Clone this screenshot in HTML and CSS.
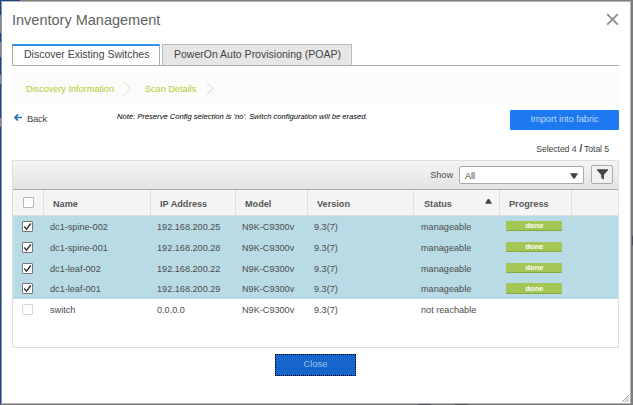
FILE: index.html
```html
<!DOCTYPE html>
<html lang="en">
<head>
<meta charset="utf-8">
<title>Inventory Management</title>
<link rel="stylesheet" href="styles.css">
</head>
<body>
<div class="dialog">
  <header class="head">
    <h1><span>Inventory Management</span></h1>
    <svg class="x" width="13" height="13" viewBox="0 0 13 13"><path d="M1.2 1.2 11.8 11.6M11.8 1.2 1.2 11.6" stroke="#8c8c8c" stroke-width="1.8" fill="none"/></svg>
  </header>
  <nav class="tabs">
    <div class="tab on"><span>Discover Existing Switches</span></div>
    <div class="tab off"><span>PowerOn Auto Provisioning (POAP)</span></div>
  </nav>
  <div class="steps">
    <span class="s1">Discovery Information</span>
    <svg class="c1" width="9" height="15" viewBox="0 0 9 15"><path d="M1 .5 7.5 7.5 1 14.5" fill="none" stroke="#d9d9d9"/></svg>
    <span class="s2">Scan Details</span>
    <svg class="c2" width="9" height="15" viewBox="0 0 9 15"><path d="M1 1.5 7 7.5 1 13.5" fill="none" stroke="#d0d0d0"/></svg>
  </div>
  <div class="actions">
    <svg class="arrow" width="8" height="7" viewBox="0 0 8 7"><path d="M4 .4 1 3.5 4 6.6M1 3.5H8" fill="none" stroke="#2672ab" stroke-width="1.7"/></svg>
    <span class="back">Back</span>
    <span class="note">Note: Preserve Config selection is 'no'. Switch configuration will be erased.</span>
    <div class="import"><span>Import into fabric</span></div>
  </div>
  <div class="count"><span>Selected 4</span><b>/</b><span>Total 5</span></div>
  <section class="grid">
    <div class="toolbar">
      <span class="show">Show</span>
      <div class="select"><span>All</span><svg width="8" height="6" viewBox="0 0 8 6"><path d="M0 .3H8L4.8 5.6H3.2Z" fill="#444"/></svg></div>
      <div class="filter"><svg width="11" height="11" viewBox="0 0 11 11"><path d="M0 .3H11V1.3L6.9 5.8V10.8L4.2 8.8V5.8L0 1.3Z" fill="#454545"/></svg></div>
    </div>
    <div class="row th">
      <div><i class="box"></i></div><div>Name</div><div>IP Address</div><div>Model</div><div>Version</div>
      <div class="sort">Status<svg width="7" height="5" viewBox="0 0 7 5"><path d="M0 4.8H7L4.2 0H2.8Z" fill="#454545"/></svg></div>
      <div>Progress</div><div></div>
    </div>
    <div class="row sel"><div><i class="box on"><svg viewBox="0 0 9 9"><path d="M1.2 4.5 3.5 7.1 7.8 1.5"/></svg></i></div><div>dc1-spine-002</div><div>192.168.200.25</div><div>N9K-C9300v</div><div>9.3(7)</div><div class="st">manageable</div><div><b class="done">done</b></div><div></div></div>
    <div class="row sel"><div><i class="box on"><svg viewBox="0 0 9 9"><path d="M1.2 4.5 3.5 7.1 7.8 1.5"/></svg></i></div><div>dc1-spine-001</div><div>192.168.200.28</div><div>N9K-C9300v</div><div>9.3(7)</div><div class="st">manageable</div><div><b class="done">done</b></div><div></div></div>
    <div class="row sel"><div><i class="box on"><svg viewBox="0 0 9 9"><path d="M1.2 4.5 3.5 7.1 7.8 1.5"/></svg></i></div><div>dc1-leaf-002</div><div>192.168.200.22</div><div>N9K-C9300v</div><div>9.3(7)</div><div class="st">manageable</div><div><b class="done">done</b></div><div></div></div>
    <div class="row sel last"><div><i class="box on"><svg viewBox="0 0 9 9"><path d="M1.2 4.5 3.5 7.1 7.8 1.5"/></svg></i></div><div>dc1-leaf-001</div><div>192.168.200.29</div><div>N9K-C9300v</div><div>9.3(7)</div><div class="st">manageable</div><div><b class="done">done</b></div><div></div></div>
    <div class="row"><div><i class="box dim"></i></div><div>switch</div><div>0.0.0.0</div><div>N9K-C9300v</div><div>9.3(7)</div><div class="st">not reachable</div><div></div><div></div></div>
  </section>
  <div class="close"><span>Close</span></div>
  <svg class="grip" width="7" height="7" viewBox="0 0 7 7"><path d="M0 7 7 0M2.5 7 7 2.5M5 7 7 5" stroke="#999" fill="none"/></svg>
</div>
<div class="peek"></div>
</body>
</html>
```

FILE: styles.css
```css
* { box-sizing: border-box; }
body {
  margin: 0; width: 633px; height: 405px; overflow: hidden; padding: 1px 2px 1px 1px;
  font: 9.15px/12px "Liberation Sans", Arial, sans-serif; color: #4d4d4d;
  background:
    linear-gradient(90deg, #7d7d7d 418px, #55565c 418px 431px, #7d7d7d 431px 455px, #55565c 455px 468px, #7d7d7d 468px) 0 404px / 100% 1px no-repeat,
    linear-gradient(#1d4686, #1d4686) 0 404px / 20px 1px no-repeat,
    linear-gradient(#1d4686, #1d4686) 0 0 / 20px 1px no-repeat,
    linear-gradient(#1d4686 15px, #8b8b8b 15px 33px, #1d4686 33px 42px, #8b8b8b 42px 57px, #1d4686 57px 75px, #8b8b8b 75px 84px, #1d4686 84px 118px, #8b8b8b 118px 127px, #1d4686 127px) 0 0 / 1px 100% no-repeat,
    #7d7d7d;
}
/* the gradients above paint the last and first pixel rows over the page behind */
.dialog { position: relative; width: 630px; height: 403px; background: #fff; border: 1px solid #b3b3b3; border-left-color: #8494ae; padding: 0 11px 0 10px; }
.head { display: flex; justify-content: space-between; height: 42px; padding-top: 9px; }
h1 { margin: 0; font-size: 14.5px; line-height: 18px; font-weight: 400; color: #626262; }
.x { margin-top: 2px; }
.tabs { display: flex; gap: 2px; height: 22px; border-bottom: 1px solid #acacac; }
.tab { height: 22px; border: 1px solid #adadad; font-size: 10.5px; line-height: 20px; padding-left: 11px; white-space: nowrap; color: #444; }
.tab.on { width: 148px; border-top: 2px solid #2f91ea; line-height: 17px; }
.tab.off { width: 190px; background: #e6e6e6; border-color: #bcbcbc; border-bottom-color: #acacac; line-height: 19px; }
.steps { display: flex; align-items: center; height: 31px; margin-top: 7px; background: #fbfbf9; padding-left: 14px; color: #b1ce35; font-size: 9.1px; white-space: nowrap; }
.s1 { width: 97px; }
.c1 { margin-right: 13px; }
.s2 { width: 61px; }
.actions { display: flex; height: 26px; padding-top: 6px; white-space: nowrap; }
.arrow { margin: 4px 5px 0 2px; }
.back { width: 90px; padding-top: 3px; color: #444; font-size: 9.4px; letter-spacing: -.25px; }
.note { width: 393px; padding-top: 1px; font-size: 7.6px; font-style: italic; color: #000; }
.import { width: 109px; height: 20px; background: #1e78f0; border-radius: 1px; color: #b9d5fa; text-align: center; font-size: 9.4px; letter-spacing: -.1px; line-height: 18px; }
.count { display: flex; justify-content: flex-end; height: 30px; padding: 13px 10px 0 0; font-size: 8.7px; letter-spacing: -.1px; color: #444; }
.count b { margin: 0 2px 0 3px; font-size: 10px; }
.grid { width: 607px; height: 188px; border: 1px solid #dfdfdf; border-radius: 1px; }
.toolbar { display: flex; align-items: flex-start; justify-content: flex-end; height: 29px; padding: 4px 5px 0 0; background: linear-gradient(#f5f5f5, #e3e3e3); border-bottom: 1px solid #aaa; }
.show { margin: 4px 6px 0 0; }
.select { display: flex; align-items: center; justify-content: space-between; width: 125px; height: 18px; padding: 2px 5px 0 5px; border: 1px solid #aaa; border-radius: 2px; background: #fff; margin: 1px 7px 0 0; }
.select svg { margin-bottom: 1px; }
.filter { display: flex; align-items: center; justify-content: center; width: 22px; height: 19px; border: 1px solid #aaa; border-radius: 2px; background: #f1f1f1; }
.row { display: grid; grid-template-columns: 31px 107px 85px 72px 106px 86px 72px 1fr; height: 21px; line-height: 22px; white-space: nowrap; }
.row > div { padding-left: 6px; }
.row > .st { padding-left: 7px; }
.row > div:first-child { padding: 5px 0 0 9px; }
.th { height: 26px; line-height: 28px; background: #f5f5f5; border-bottom: 1px solid #e0e0e0; font-weight: 700; color: #575757; }
.row.th > div { padding-left: 9px; border-right: 1px solid #e0e0e0; }
.row.th > div:first-child { padding: 7px 0 0 10px; }
.row.th > div:last-child { border: 0; }
.row.th > .sort { display: flex; justify-content: space-between; padding: 0 7px 0 10px; }
.sort svg { margin-top: 9px; }
.sel { background: #b9dbe5; }
.sel.last { height: 20px; line-height: 21px; }
.row.last > div:first-child { padding-top: 4px; }
.box { display: block; width: 11px; height: 11px; border: 1px solid #b5b5b5; border-radius: 1px; background: #fff; }
.box.on { border-color: #777; }
.box.dim { border-color: #d5d5d5; }
.box svg { display: block; width: 9px; height: 9px; }
.box path { fill: none; stroke: #333; stroke-width: 1.4; }
.done { display: block; width: 56px; height: 10px; margin-top: 5px; background: #a3c655; border-bottom: 1px solid #85a83c; border-radius: 1px; color: #fff; font-size: 7.5px; line-height: 9px; text-align: center; padding-left: 1px; }
.last .done { margin-top: 4px; height: 11px; line-height: 11px; }
.close { width: 81px; height: 22px; margin: 6px 0 0 263px; background: #1565ca; border: 1px dotted #000; color: #9fc3ef; text-align: center; font-size: 9.3px; line-height: 18px; }
.grip { position: absolute; right: 1px; bottom: 1px; }
.peek { position: absolute; left: 631px; top: 235px; width: 2px; height: 11px; background: #4a4e5a; border-left: 1px solid #8d7a68; border-radius: 0 2px 2px 0; }
```
